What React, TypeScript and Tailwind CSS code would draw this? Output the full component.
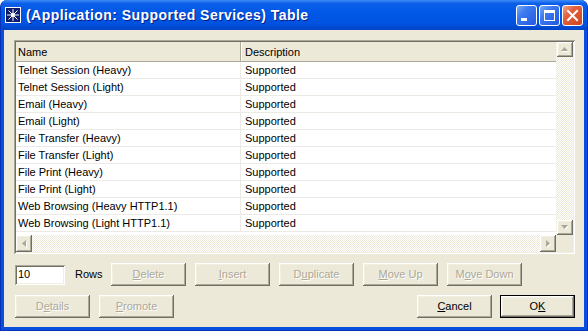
import * as React from 'react';

const rows = [
  'Telnet Session (Heavy)',
  'Telnet Session (Light)',
  'Email (Heavy)',
  'Email (Light)',
  'File Transfer (Heavy)',
  'File Transfer (Light)',
  'File Print (Heavy)',
  'File Print (Light)',
  'Web Browsing (Heavy HTTP1.1)',
  'Web Browsing (Light HTTP1.1)',
];

const raised =
  'bg-[#ece9d8] shadow-[inset_-1px_-1px_#716f64,inset_1px_1px_#ffffff,inset_-2px_-2px_#aca899,inset_2px_2px_#f1efe2]';
const sunken =
  'shadow-[inset_1px_1px_#aca899,inset_-1px_-1px_#ffffff,inset_2px_2px_#716f64,inset_-2px_-2px_#f1efe2]';
const checker =
  '[background-image:repeating-conic-gradient(#ece9d8_0%_25%,#ffffff_0%_50%)] [background-size:2px_2px]';

function Arrow({ dir }: { dir: 'up' | 'down' | 'left' | 'right' }) {
  const pts = {
    up: '3.5,0 7,4 0,4',
    down: '0,0 7,0 3.5,4',
    left: '4,0 4,7 0,3.5',
    right: '0,0 4,3.5 0,7',
  }[dir];
  const vertical = dir === 'up' || dir === 'down';
  return (
    <svg width={vertical ? 8 : 5} height={vertical ? 5 : 8} viewBox={vertical ? '0 0 8 5' : '0 0 5 8'}>
      <polygon points={pts} fill="#ffffff" transform="translate(1,1)" />
      <polygon points={pts} fill="#aca899" />
    </svg>
  );
}

function Btn({
  pre,
  u,
  post,
  disabled,
  isDefault,
}: {
  pre: string;
  u: string;
  post: string;
  disabled?: boolean;
  isDefault?: boolean;
}) {
  const text = disabled ? 'text-[#aca899] [text-shadow:1px_1px_0_#ffffff]' : 'text-black';
  const label = (
    <span>
      {pre}
      <span className="underline">{u}</span>
      {post}
    </span>
  );
  if (isDefault) {
    return (
      <div className="w-[75px] h-[23px] border border-black flex">
        <div className={`flex-1 flex items-center justify-center text-[11px] ${raised} ${text}`}>{label}</div>
      </div>
    );
  }
  return (
    <div className={`w-[75px] h-[23px] flex items-center justify-center text-[11px] ${raised} ${text}`}>
      {label}
    </div>
  );
}

function TitleButton({ kind }: { kind: 'min' | 'max' | 'close' }) {
  const bg =
    kind === 'close'
      ? '[background-image:linear-gradient(135deg,#f0a58a_0%,#e2613e_35%,#cc461f_100%)]'
      : '[background-image:linear-gradient(135deg,#7aa9f8_0%,#3c7af0_35%,#2358df_100%)]';
  return (
    <div className={`w-[21px] h-[21px] rounded-[3px] border border-white flex items-center justify-center ${bg}`}>
      {kind === 'min' && (
        <svg width="19" height="19" viewBox="0 0 19 19">
          <rect x="4" y="12" width="6" height="3" fill="#ffffff" />
        </svg>
      )}
      {kind === 'max' && (
        <svg width="19" height="19" viewBox="0 0 19 19">
          <rect x="4.5" y="4.5" width="10" height="10" fill="none" stroke="#ffffff" strokeWidth="1" />
          <rect x="4" y="4" width="11" height="3" fill="#ffffff" />
        </svg>
      )}
      {kind === 'close' && (
        <svg width="19" height="19" viewBox="0 0 19 19">
          <path d="M5 5 L14 14 M14 5 L5 14" stroke="#ffffff" strokeWidth="2" strokeLinecap="square" />
        </svg>
      )}
    </div>
  );
}

export default function App() {
  return (
    <div className="w-[588px] h-[331px] bg-white font-['Liberation_Sans',Arial,sans-serif] text-black">
      <div className="h-full flex flex-col rounded-t-[7px] overflow-hidden bg-[#0a4fdc] border-x border-b border-[#0831b9]">
        {/* title bar */}
        <div className="h-[30px] shrink-0 flex items-center pl-[4px] pr-[4px] [background-image:linear-gradient(to_bottom,#3d8cf7_0%,#0b5ee9_12%,#0058e6_45%,#0052df_80%,#0043c6_100%)]">
          <div className="w-[16px] h-[16px] border border-white bg-[#101a6c] flex items-center justify-center">
            <svg width="14" height="14" viewBox="0 0 14 14">
              <path
                d="M7 1 L7 13 M1 7 L13 7 M2.5 2.5 L11.5 11.5 M11.5 2.5 L2.5 11.5"
                stroke="#ffffff"
                strokeWidth="1"
              />
              <circle cx="7" cy="7" r="2" fill="#ffffff" />
            </svg>
          </div>
          <div className="ml-[5px] text-white font-bold text-[14px] tracking-[0.45px] [text-shadow:1px_1px_0_#0a1a86]">
            (Application: Supported Services) Table
          </div>
          <div className="ml-auto flex gap-[2px]">
            <TitleButton kind="min" />
            <TitleButton kind="max" />
            <TitleButton kind="close" />
          </div>
        </div>

        {/* body */}
        <div className="flex-1 mx-[3px] mb-[3px] bg-[#ece9d8] flex flex-col text-[11px]">
          {/* table */}
          <div className={`ml-[10px] mt-[10px] w-[561px] h-[214px] p-[2px] flex flex-col ${sunken}`}>
            <div className="flex h-[193px]">
              <div className="flex-1 bg-white flex flex-col">
                <div className="h-[20px] flex bg-[#ece9d8] border-b border-[#aca899]">
                  <div className="w-[225px] pl-[2px] pt-[1px] flex items-center border-r border-[#aca899]">Name</div>
                  <div className="flex-1 pl-[3px] pt-[1px] flex items-center border-l border-white">Description</div>
                </div>
                {rows.map((r) => (
                  <div key={r} className="h-[17px] flex border-b border-[#ebeae5]">
                    <div className="w-[225px] pl-[2px] pt-[1px] flex items-center border-r border-[#ebeae5]">{r}</div>
                    <div className="flex-1 pl-[4px] pt-[1px] flex items-center">Supported</div>
                  </div>
                ))}
              </div>
              <div className={`w-[17px] flex flex-col ${checker}`}>
                <div className={`ml-auto w-[16px] h-[15px] flex items-center justify-center ${raised}`}>
                  <Arrow dir="up" />
                </div>
                <div className="flex-1" />
                <div className={`ml-auto w-[16px] h-[15px] flex items-center justify-center ${raised}`}>
                  <Arrow dir="down" />
                </div>
              </div>
            </div>
            <div className="flex h-[17px]">
              <div className={`flex-1 flex ${checker}`}>
                <div className={`w-[16px] h-full flex items-center justify-center ${raised}`}>
                  <Arrow dir="left" />
                </div>
                <div className="flex-1" />
                <div className={`w-[16px] h-full flex items-center justify-center ${raised}`}>
                  <Arrow dir="right" />
                </div>
              </div>
              <div className="w-[17px] bg-[#ece9d8]" />
            </div>
          </div>

          {/* row 1 controls */}
          <div className="mt-[9px] ml-[11px] flex items-center">
            <div className={`w-[50px] h-[20px] bg-white pl-[3px] flex items-center ${sunken}`}>10</div>
            <div className="w-[46px] pl-[10px]">Rows</div>
            <div className="flex gap-[9px]">
              <Btn pre="" u="D" post="elete" disabled />
              <Btn pre="" u="I" post="nsert" disabled />
              <Btn pre="D" u="u" post="plicate" disabled />
              <Btn pre="" u="M" post="ove Up" disabled />
              <Btn pre="M" u="o" post="ve Down" disabled />
            </div>
          </div>

          {/* row 2 controls */}
          <div className="mt-[9px] ml-[11px] mr-[9px] flex items-center">
            <div className="flex gap-[9px]">
              <Btn pre="D" u="e" post="tails" disabled />
              <Btn pre="" u="P" post="romote" disabled />
            </div>
            <div className="ml-auto flex gap-[8px]">
              <Btn pre="" u="C" post="ancel" />
              <Btn pre="O" u="K" post="" isDefault />
            </div>
          </div>
        </div>
      </div>
    </div>
  );
}
